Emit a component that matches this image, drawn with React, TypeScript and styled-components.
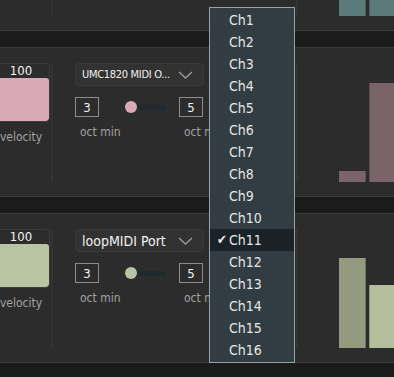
import React from 'react';
import styled, { createGlobalStyle } from 'styled-components';

const GlobalStyle = createGlobalStyle`
  html, body {
    margin: 0;
    padding: 0;
    background: #1b1b1b;
    overflow: hidden;
  }
  * { box-sizing: border-box; }
`;

const FONT = `"DejaVu Sans Condensed", "DejaVu Sans", sans-serif`;

const Page = styled.div`
  position: relative;
  width: 394px;
  height: 377px;
  overflow: hidden;
  font-family: ${FONT};
  font-stretch: condensed;
`;

const Stack = styled.div`
  display: flex;
  flex-direction: column;
  gap: 16px;
`;

const Row = styled.section`
  display: flex;
  height: 150px;
  padding: 15px 0 14px;
  background: #2c2c2c;
  border-top: 1px solid #3a3a3a;
  border-bottom: 1px solid #3a3a3a;
`;

// the track above, scrolled so only its bottom edge is in view
const TailRow = styled(Row)`
  height: 31px;
  padding-top: 0;
  border-top: none;
`;

const Spacer = styled.div<{ $w: number }>`
  width: ${({ $w }) => $w}px;
  flex-shrink: 0;
`;

const VelocityCol = styled.div`
  width: 58px;
  margin-left: -8px;
  display: flex;
  flex-direction: column;
  align-items: center;
  flex-shrink: 0;
`;

const VelocityBox = styled.div`
  width: 58px;
  height: 59px;
  border: 1px solid #3c3c3c;
  border-radius: 4px;
  display: flex;
  flex-direction: column;
  overflow: hidden;
`;

const VelocityValue = styled.div`
  height: 14px;
  line-height: 14px;
  text-align: center;
  color: #f2f2f2;
  font-size: 13px;
`;

const VelocityFill = styled.div<{ $color: string }>`
  flex: 1;
  background: ${({ $color }) => $color};
  border-radius: 3px;
`;

const Label = styled.div`
  color: #a3a3a3;
  font-size: 12px;
  line-height: 14px;
  white-space: nowrap;
`;

const VelocityLabel = styled(Label)`
  margin-top: 8px;
`;

const Divider = styled.div<{ $gap: number }>`
  width: 2px;
  margin-left: ${({ $gap }) => $gap}px;
  background: #333333;
  flex-shrink: 0;
`;

const MidCol = styled.div`
  width: 129px;
  margin-left: 22px;
  display: flex;
  flex-direction: column;
  flex-shrink: 0;
`;

const Select = styled.div<{ $small: boolean }>`
  height: 23px;
  display: flex;
  align-items: center;
  justify-content: space-between;
  padding: 0 10px 0 6px;
  background: #323232;
  border: 1px solid #3b3b3b;
  border-radius: 4px;
  color: #f0f0f0;
  font-size: ${({ $small }) => ($small ? '11px' : '14px')};
  letter-spacing: ${({ $small }) => ($small ? '-0.3px' : '0')};
  white-space: nowrap;
`;

const Controls = styled.div`
  display: flex;
  align-items: center;
  height: 20px;
  margin-top: 11px;
`;

const NumBox = styled.div`
  width: 24px;
  height: 20px;
  border: 1px solid #8c8c8c;
  color: #f2f2f2;
  font-size: 13px;
  display: flex;
  align-items: center;
  justify-content: center;
`;

const Slider = styled.div`
  position: relative;
  width: 41px;
  height: 5px;
  margin: 0 13px 0 26px;
  background: #20292d;
  border-radius: 3px;
`;

const Thumb = styled.div<{ $color: string }>`
  position: absolute;
  left: 0;
  top: -4px;
  width: 12px;
  height: 12px;
  border-radius: 50%;
  background: ${({ $color }) => $color};
`;

const Labels = styled.div`
  display: flex;
  margin-top: 8px;
`;

const OctLabel = styled(Label)<{ $right?: boolean }>`
  padding-left: 5px;
  ${({ $right }) => ($right ? 'margin-left: auto; width: 25px;' : '')}
`;

const Bars = styled.div`
  display: flex;
  align-items: flex-end;
  gap: 3px;
  padding-left: 41px;
`;

const Bar = styled.div<{ $color: string; $edge: 'left' | 'right' }>`
  width: 27px;
  flex-shrink: 0;
  background: ${({ $color }) => $color};
  border-${({ $edge }) => $edge}: 1px solid rgba(0, 0, 0, 0.22);
`;

const Menu = styled.ul`
  position: absolute;
  left: 209px;
  top: 7px;
  width: 86px;
  margin: 0;
  padding: 1px 0;
  list-style: none;
  background: #313c43;
  border: 1px solid #98a2a6;
`;

const MenuItem = styled.li<{ $active: boolean }>`
  position: relative;
  height: 22px;
  line-height: 22px;
  padding-left: 19px;
  font-size: 14px;
  color: #e6e6e6;
  background: ${({ $active }) => ($active ? '#1a2227' : 'transparent')};
`;

const Check = styled.span`
  position: absolute;
  left: 7px;
  top: 0;
  font-size: 13px;
  color: #f2f2f2;
`;

const Chevron = () => (
  <svg width="15" height="8" viewBox="0 0 15 8" style={{ flexShrink: 0 }}>
    <path d="M1 1 L7.5 7 L14 1" fill="none" stroke="#9a9a9a" strokeWidth="1.4" />
  </svg>
);

type Track = {
  port: string;
  small: boolean;
  color: string;
  bars: [number, string][];
};

const tracks: Track[] = [
  { port: 'UMC1820 MIDI O...', small: true, color: '#d9a9b5', bars: [[11, '#7b6469'], [99, '#7a6469']] },
  { port: 'loopMIDI Port', small: false, color: '#b8c4a2', bars: [[90, '#939a80'], [63, '#b4bd9c']] },
];

const channels = Array.from({ length: 16 }, (_, i) => `Ch${i + 1}`);

export default function App() {
  return (
    <Page>
      <GlobalStyle />
      <Stack>
        <TailRow>
          <Spacer $w={50} />
          <Divider $gap={1} />
          <Spacer $w={151} />
          <Divider $gap={92} />
          <Bars>
            <Bar $color="#5b7b7b" $edge="right" style={{ height: 16 }} />
            <Bar $color="#5b7b7b" $edge="left" style={{ height: 16 }} />
          </Bars>
        </TailRow>
        {tracks.map((t, i) => (
          <Row key={i}>
            <VelocityCol>
              <VelocityBox>
                <VelocityValue>100</VelocityValue>
                <VelocityFill $color={t.color} />
              </VelocityBox>
              <VelocityLabel>velocity</VelocityLabel>
            </VelocityCol>
            <Divider $gap={1} />
            <MidCol>
              <Select $small={t.small}>
                <span>{t.port}</span>
                <Chevron />
              </Select>
              <Controls>
                <NumBox>3</NumBox>
                <Slider>
                  <Thumb $color={t.color} />
                </Slider>
                <NumBox>5</NumBox>
              </Controls>
              <Labels>
                <OctLabel>oct min</OctLabel>
                <OctLabel $right>oct max</OctLabel>
              </Labels>
            </MidCol>
            <Divider $gap={92} />
            <Bars>
              {t.bars.map(([h, c], j) => (
                <Bar key={j} $color={c} $edge={j === 0 ? 'right' : 'left'} style={{ height: h }} />
              ))}
            </Bars>
          </Row>
        ))}
      </Stack>
      <Menu>
        {channels.map((c) => (
          <MenuItem key={c} $active={c === 'Ch11'}>
            {c === 'Ch11' && <Check>✔</Check>}
            {c}
          </MenuItem>
        ))}
      </Menu>
    </Page>
  );
}
